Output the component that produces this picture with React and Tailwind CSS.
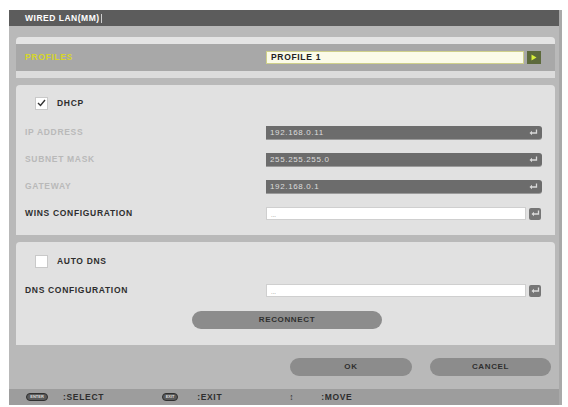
const font = { fontFamily: '"Liberation Sans", Arial, sans-serif' }

function EnterIcon({ className = '' }) {
  return (
    <svg width="9" height="7" viewBox="0 0 9 7" className={className}>
      <path d="M7.5 0.5 V4 H2" fill="none" stroke="currentColor" strokeWidth="1.3" />
      <path d="M0.5 4 L3 1.8 V6.2 Z" fill="currentColor" />
    </svg>
  )
}

function Check({ checked }) {
  return (
    <div className="w-[13px] h-[13px] bg-white border border-[#c9c9c9] flex items-center justify-center">
      {checked && (
        <svg width="9" height="8" viewBox="0 0 9 8">
          <path d="M1 4 L3.5 6.5 L8 1" fill="none" stroke="#333" strokeWidth="1.4" />
        </svg>
      )}
    </div>
  )
}

function DarkField({ label, value }) {
  return (
    <div className="flex items-center h-[13px]">
      <span className="w-[241px] text-[8.5px] font-bold text-[#b9b9b9] tracking-[0.08em]">{label}</span>
      <div className="w-[276px] h-[13px] bg-[#6c6c6c] rounded-r-[3px] flex items-center justify-between pl-[4px] pr-[4px] shadow-[0_1px_0_#9a9a9a]">
        <span className="text-[8px] text-[#dcdcdc] tracking-[0.08em]">{value}</span>
        <EnterIcon className="text-[#d8d8d8]" />
      </div>
    </div>
  )
}

function WhiteField({ label }) {
  return (
    <div className="flex items-center h-[13px]">
      <span className="w-[241px] text-[8.5px] font-bold text-[#2e2e2e] tracking-[0.08em]">{label}</span>
      <div className="w-[260px] h-[13px] bg-white border border-[#cfcfcf] flex items-end pl-[4px] pb-[1px]">
        <span className="text-[6px] text-[#777] leading-none">...</span>
      </div>
      <div className="ml-[3px] w-[12px] h-[12px] bg-[#767676] rounded-[2px] flex items-center justify-center">
        <EnterIcon className="text-[#dcdcdc]" />
      </div>
    </div>
  )
}

function Pill({ children, className = '' }) {
  return (
    <div className={`h-[18px] rounded-full bg-[#8c8c8c] flex items-center justify-center text-[8px] font-bold text-[#2f2f2f] tracking-[0.08em] ${className}`}>
      {children}
    </div>
  )
}

export default function App() {
  return (
    <div className="w-[568px] h-[407px] bg-white pt-[10px] pl-[9px] pr-[6px] pb-[2px]" style={font}>
      <div className="h-full flex flex-col bg-[#b9b9b9] border-r-[3px] border-[#a9a9a9]">
        {/* Title bar */}
        <div className="h-[16px] bg-[#5c5c5c] flex items-center pl-[16px] gap-[1px]">
          <span className="text-[8.5px] font-bold text-white tracking-[0.06em]">WIRED LAN(MM)</span>
          <span className="w-[1px] h-[9px] bg-[#cfcfcf]" />
        </div>

        <div className="flex-1 flex flex-col pl-[7px] pr-[4px] pt-[11px]">
          {/* Profiles */}
          <div className="h-[41px] flex flex-col rounded-t-[4px] overflow-hidden">
            <div className="h-[7px] bg-[#e4e4e4]" />
            <div className="flex-1 bg-[#a8a8a8] flex items-center px-[9px]">
              <span className="w-[241px] text-[8.5px] font-bold text-[#d6d629] tracking-[0.08em]">PROFILES</span>
              <div className="w-[258px] h-[13px] bg-[#fbfbe8] border border-[#cfd08a] flex items-center pl-[4px]">
                <span className="text-[8.5px] font-bold text-[#222] tracking-[0.08em]">PROFILE 1</span>
              </div>
              <div className="ml-[3px] w-[14px] h-[13px] bg-[#5d6a3c] flex items-center justify-center">
                <svg width="6" height="7" viewBox="0 0 6 7"><path d="M0.5 0.5 L5.5 3.5 L0.5 6.5 Z" fill="#d8ef3a" /></svg>
              </div>
            </div>
            <div className="h-[7px] bg-[#dcdcdc]" />
          </div>

          {/* Network */}
          <div className="mt-[7px] h-[150px] bg-[#e1e1e1] rounded-t-[4px] pt-[11px] px-[9px] flex flex-col">
            <div className="flex items-center h-[14px] pl-[10px] gap-[9px]">
              <Check checked />
              <span className="text-[8.5px] font-bold text-[#2e2e2e] tracking-[0.08em]">DHCP</span>
            </div>
            <div className="mt-[16px] flex flex-col gap-[14px]">
              <DarkField label="IP ADDRESS" value="192.168.0.11" />
              <DarkField label="SUBNET MASK" value="255.255.255.0" />
              <DarkField label="GATEWAY" value="192.168.0.1" />
              <WhiteField label="WINS CONFIGURATION" />
            </div>
          </div>

          {/* DNS */}
          <div className="mt-[7px] h-[103px] bg-[#e1e1e1] rounded-t-[4px] pt-[13px] px-[9px] flex flex-col">
            <div className="flex items-center h-[13px] pl-[10px] gap-[9px]">
              <Check />
              <span className="text-[8.5px] font-bold text-[#2e2e2e] tracking-[0.08em]">AUTO DNS</span>
            </div>
            <div className="mt-[16px]">
              <WhiteField label="DNS CONFIGURATION" />
            </div>
            <div className="mt-[14px] flex pl-[167px]">
              <Pill className="w-[190px]">RECONNECT</Pill>
            </div>
          </div>

          {/* Buttons */}
          <div className="mt-[13px] flex pl-[274px] gap-[18px]">
            <Pill className="w-[122px]">OK</Pill>
            <Pill className="w-[121px]">CANCEL</Pill>
          </div>
        </div>

        {/* Footer */}
        <div className="mt-[13px] h-[16px] bg-[#9d9d9d] flex items-center text-[8.5px] font-bold text-[#2e2e2e] tracking-[0.08em]">
          <div className="ml-[17px] w-[22px] h-[8px] rounded-full bg-[#5a5a5a] border border-[#2f2f2f] flex items-center justify-center">
            <span className="text-[4px] text-[#ddd] leading-none tracking-normal">ENTER</span>
          </div>
          <span className="ml-[15px]">:SELECT</span>
          <div className="ml-[58px] w-[16px] h-[8px] rounded-full bg-[#5a5a5a] border border-[#2f2f2f] flex items-center justify-center">
            <span className="text-[4px] text-[#ddd] leading-none tracking-normal">EXIT</span>
          </div>
          <span className="ml-[19px]">:EXIT</span>
          <span className="ml-[67px]">↕</span>
          <span className="ml-[27px]">:MOVE</span>
        </div>
      </div>
    </div>
  )
}
